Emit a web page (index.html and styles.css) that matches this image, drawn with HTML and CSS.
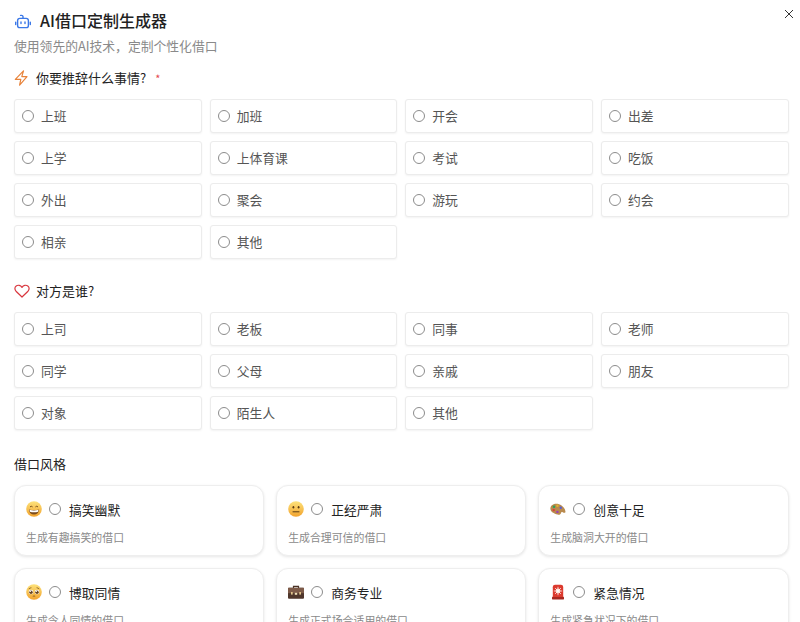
FILE: index.html
```html
<!DOCTYPE html>
<html lang="zh-CN">
<head>
<meta charset="utf-8">
<title>AI借口定制生成器</title>
<link rel="stylesheet" href="styles.css">
</head>
<body>
<main class="dialog">
  <button class="close" aria-label="关闭"><svg viewBox="0 0 10 10" width="10" height="10"><path d="M1 1l8 8M9 1l-8 8" stroke="#333" stroke-width="1" fill="none"/></svg></button>
  <header class="head">
    <h1 class="title">
      <svg class="bot" viewBox="0 0 16 16" width="16" height="16" fill="none" stroke="#3b78e7" stroke-width="1.400" stroke-linecap="round" stroke-linejoin="round"><path d="M8 4.200V2.600C8 1.800 7.400 1.400 6.600 1.400H5.600"/><rect x="2.600" y="4.400" width="10.800" height="9.200" rx="2.200"/><path d="M.7 8.200v2.400M15.300 8.200v2.400M6 8v1.600M10 8v1.600"/></svg>
      AI借口定制生成器
    </h1>
    <p class="sub">使用领先的AI技术，定制个性化借口</p>
  </header>

  <section class="block first">
    <div class="label">
      <svg viewBox="0 0 16 16" width="16" height="16" fill="none" stroke="#e8833a" stroke-width="1.200" stroke-linejoin="round"><path d="M9.500.9 1.300 9.400h5.500L5.600 15.100 13 6.600H7.800z"/></svg>
      <span>你要推辞什么事情?</span><em class="req">*</em>
    </div>
    <div class="opts">
      <label class="opt"><i class="radio"></i>上班</label>
      <label class="opt"><i class="radio"></i>加班</label>
      <label class="opt"><i class="radio"></i>开会</label>
      <label class="opt"><i class="radio"></i>出差</label>
      <label class="opt"><i class="radio"></i>上学</label>
      <label class="opt"><i class="radio"></i>上体育课</label>
      <label class="opt"><i class="radio"></i>考试</label>
      <label class="opt"><i class="radio"></i>吃饭</label>
      <label class="opt"><i class="radio"></i>外出</label>
      <label class="opt"><i class="radio"></i>聚会</label>
      <label class="opt"><i class="radio"></i>游玩</label>
      <label class="opt"><i class="radio"></i>约会</label>
      <label class="opt"><i class="radio"></i>相亲</label>
      <label class="opt"><i class="radio"></i>其他</label>
    </div>
  </section>

  <section class="block second">
    <div class="label">
      <svg viewBox="0 0 16 16" width="16" height="16" fill="none" stroke="#d9363e" stroke-width="1.200" stroke-linejoin="round"><path d="M8 14 2 8.200C.4 6.500.6 4 2.200 2.900 4 1.700 6.600 2.200 8 4.400c1.400-2.200 4-2.700 5.800-1.500C15.400 4 15.600 6.500 14 8.200z"/></svg>
      <span>对方是谁?</span>
    </div>
    <div class="opts">
      <label class="opt"><i class="radio"></i>上司</label>
      <label class="opt"><i class="radio"></i>老板</label>
      <label class="opt"><i class="radio"></i>同事</label>
      <label class="opt"><i class="radio"></i>老师</label>
      <label class="opt"><i class="radio"></i>同学</label>
      <label class="opt"><i class="radio"></i>父母</label>
      <label class="opt"><i class="radio"></i>亲戚</label>
      <label class="opt"><i class="radio"></i>朋友</label>
      <label class="opt"><i class="radio"></i>对象</label>
      <label class="opt"><i class="radio"></i>陌生人</label>
      <label class="opt"><i class="radio"></i>其他</label>
    </div>
  </section>

  <section class="block third">
    <div class="label plain"><span>借口风格</span></div>
    <div class="cards">
      <div class="card">
        <div class="card-top">
          <svg class="emoji" viewBox="0 0 16 16" width="16" height="16"><defs><linearGradient id="f1" x1="0" y1="0" x2="0" y2="1"><stop offset="0" stop-color="#fde27a"/><stop offset="1" stop-color="#f2a32e"/></linearGradient></defs><circle cx="8" cy="8" r="7.800" fill="url(#f1)"/><path d="M4 5.900q1.300-1.300 2.600 0M9.400 5.900q1.300-1.300 2.600 0" stroke="#6b4415" stroke-width=".9" fill="none"/><path d="M3 8.400q5 1.400 10 0q-.4 5-5 5t-5-5z" fill="#7a4a1c"/><path d="M3.600 8.800q4.400 1.200 8.800 0l-.3 1.900q-4.100 1-8.200 0z" fill="#fff"/></svg>
          <i class="radio"></i><span class="card-name">搞笑幽默</span>
        </div>
        <p class="card-desc">生成有趣搞笑的借口</p>
      </div>
      <div class="card">
        <div class="card-top">
          <svg class="emoji" viewBox="0 0 16 16" width="16" height="16"><defs><linearGradient id="f2" x1="0" y1="0" x2="0" y2="1"><stop offset="0" stop-color="#fde27a"/><stop offset="1" stop-color="#f2a32e"/></linearGradient></defs><circle cx="8" cy="8" r="7.800" fill="url(#f2)"/><ellipse cx="5.400" cy="6.300" rx=".9" ry="1.300" fill="#5a3a12"/><ellipse cx="10.600" cy="6.300" rx=".9" ry="1.300" fill="#5a3a12"/><path d="M5 10.800h6" stroke="#5a3a12" stroke-width="1" stroke-linecap="round"/></svg>
          <i class="radio"></i><span class="card-name">正经严肃</span>
        </div>
        <p class="card-desc">生成合理可信的借口</p>
      </div>
      <div class="card">
        <div class="card-top">
          <svg class="emoji" viewBox="0 0 16 16" width="16" height="16"><path d="M.4 7.200C.8 3.600 5 1.800 9 3.200c3 1 5.800 3.400 6.400 7 .3 1.800-1.200 2-2.400 1.200-1-.7-1.800-.6-2 .5-.3 1.600-1.800 2.200-3.400 1.600C3.800 12.500 0 10.500.4 7.200z" fill="#b98a4e"/><circle cx="4" cy="5.800" r="1.300" fill="#2f9e58"/><circle cx="7.400" cy="4.800" r="1.200" fill="#e2b32d"/><circle cx="3.700" cy="9" r="1.200" fill="#d9403a"/><circle cx="10.800" cy="6.700" r="1.200" fill="#5a5fd0"/><circle cx="7.400" cy="10.900" r="1.200" fill="#9b3fb5"/></svg>
          <i class="radio"></i><span class="card-name">创意十足</span>
        </div>
        <p class="card-desc">生成脑洞大开的借口</p>
      </div>
      <div class="card">
        <div class="card-top">
          <svg class="emoji" viewBox="0 0 16 16" width="16" height="16"><defs><linearGradient id="f4" x1="0" y1="0" x2="0" y2="1"><stop offset="0" stop-color="#fde27a"/><stop offset="1" stop-color="#f2a32e"/></linearGradient></defs><circle cx="8" cy="8" r="7.800" fill="url(#f4)"/><circle cx="5" cy="8" r="2.300" fill="#fff"/><circle cx="11" cy="8" r="2.300" fill="#fff"/><circle cx="5" cy="8.200" r="1.700" fill="#6a4520"/><circle cx="11" cy="8.200" r="1.700" fill="#6a4520"/><circle cx="4.500" cy="7.500" r=".6" fill="#fff"/><circle cx="10.500" cy="7.500" r=".6" fill="#fff"/><path d="M2.800 4.800q1.400-.9 2.600-1.100M13.200 4.800q-1.400-.9-2.600-1.100M6.800 12.300q1.200-.7 2.400 0" stroke="#6b4415" stroke-width=".7" fill="none"/></svg>
          <i class="radio"></i><span class="card-name">博取同情</span>
        </div>
        <p class="card-desc">生成令人同情的借口</p>
      </div>
      <div class="card">
        <div class="card-top">
          <svg class="emoji" viewBox="0 0 16 16" width="16" height="16"><path d="M5.500 4V2.300h5V4" fill="none" stroke="#4a3226" stroke-width="1.200"/><rect y="3.800" width="16" height="11" rx="1" fill="#4f362b"/><rect y="3.800" width="16" height="5.400" fill="#7d5a48"/><rect x="3" y="8" width="1.700" height="2.600" fill="#e0c48c"/><rect x="11.300" y="8" width="1.700" height="2.600" fill="#e0c48c"/><rect x="6.800" y="8.800" width="2.400" height="2" fill="#f0e0b8"/></svg>
          <i class="radio"></i><span class="card-name">商务专业</span>
        </div>
        <p class="card-desc">生成正式场合适用的借口</p>
      </div>
      <div class="card">
        <div class="card-top">
          <svg class="emoji" viewBox="0 0 16 16" width="16" height="16"><rect x="2" y="12.800" width="12" height="2.600" rx=".6" fill="#a8271f"/><path d="M2.800 13V3.200C2.800 1.600 4 .8 5 .8h6c1 0 2.200.8 2.200 2.400V13z" fill="#dc3a2e"/><circle cx="8" cy="7" r="2.400" fill="#ffd9c9"/><path d="M8 2.800v8.400M3.800 7h8.400M5 4l6 6M11 4l-6 6" stroke="#fff" stroke-width=".7"/></svg>
          <i class="radio"></i><span class="card-name">紧急情况</span>
        </div>
        <p class="card-desc">生成紧急状况下的借口</p>
      </div>
    </div>
  </section>
</main>
</body>
</html>
```
FILE: styles.css
```css
* { box-sizing: border-box; }
html, body { margin: 0; padding: 0; height: 100%; background: #fff; overflow: hidden; }
body { font-family: "Noto Sans CJK SC", "Noto Sans", sans-serif; color: #1f1f1f; }
.dialog { position: relative; height: 622px; overflow: hidden; padding: 8px 11.500px 0 14px; }
.close { position: absolute; top: 7.500px; right: 5px; width: 12px; height: 12px; padding: 1px; border: 0; background: none; display: flex; }
.head { display: flex; flex-direction: column; gap: 5px; }
.title { margin: 0; display: flex; align-items: center; gap: 9px; font-size: 16px; font-weight: 500; line-height: 24px; color: #222; }
.bot { flex: none; margin-left: 1px; margin-top: 3px; }
.sub { margin: 0; font-size: 12.800px; line-height: 18px; color: #8a8a8a; }
.block { display: flex; flex-direction: column; }
.first { margin-top: 14px; }
.second { margin-top: 23px; }
.third { margin-top: 25px; }
.label { display: flex; align-items: center; gap: 6px; height: 18px; font-size: 13px; line-height: 18px; color: #222; margin-bottom: 12px; }
.label.plain { margin-bottom: 12px; }
.req { font-style: normal; color: #e5484d; font-size: 11px; margin-left: 3px; }
.opts { display: grid; grid-template-columns: repeat(4, 1fr); gap: 8px; }
.opt { display: flex; align-items: center; gap: 7px; height: 34px; padding: 0 7px 2px; border: 1px solid #ececec; border-radius: 3px; background: #fff; box-shadow: 0 1px 2px rgba(0,0,0,.05); font-size: 12.800px; color: #555; }
.opt .radio { margin-top: 2px; }
.radio { flex: none; display: block; width: 12px; height: 12px; border: 1px solid #8c8c8c; border-radius: 50%; background: #fff; }
.cards { display: grid; grid-template-columns: repeat(3, 1fr); gap: 12px; }
.card { height: 71px; padding: 15px 11px 0; border: 1px solid #eee; border-radius: 12px; background: #fff; box-shadow: 0 1px 3px rgba(0,0,0,.1); }
.card-top { display: flex; align-items: center; gap: 7px; height: 16px; }
.card-name { font-size: 12.800px; color: #222; margin-left: 1px; }
.emoji { flex: none; }
.card-desc { margin: 12px 0 0; font-size: 10.900px; line-height: 16px; color: #8a8a8a; }
```
